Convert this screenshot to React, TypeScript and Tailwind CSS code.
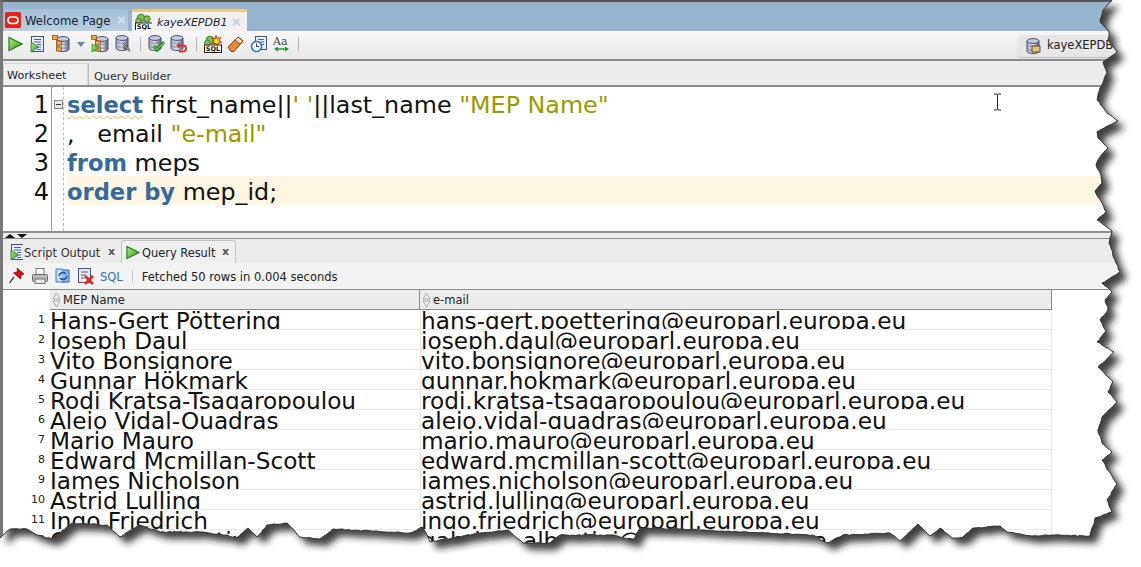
import React from "react";

const TOOL_FONT = "font-['DejaVu_Sans',sans-serif]";

const RIGHT_AND_BOTTOM: number[][] = [
  [1112, 0], [1103, 10], [1100, 22], [1109, 32], [1108, 40], [1117, 52], [1103, 62], [1107, 73], [1100, 88], [1097, 100],
  [1107, 113], [1118, 121], [1097, 132], [1098, 138], [1108, 148], [1100, 157], [1096, 165], [1101, 175], [1102, 183],
  [1095, 191], [1102, 203], [1106, 212], [1097, 220], [1112, 231], [1109, 243], [1115, 260], [1120, 272], [1102, 283],
  [1112, 292], [1105, 300], [1108, 310], [1100, 320], [1106, 331], [1097, 342], [1114, 352], [1098, 367], [1108, 377],
  [1113, 382], [1108, 392], [1117, 402], [1102, 417], [1098, 430], [1102, 443], [1112, 452], [1102, 460], [1113, 478],
  [1117, 484], [1107, 500], [1112, 512], [1095, 518], [1090, 536], [1055, 535], [1032, 536], [1007, 532], [1000, 526],
  [973, 528], [963, 537], [952, 538], [940, 528], [930, 536], [918, 524], [900, 541], [890, 533], [843, 535], [827, 543],
  [813, 535], [747, 532], [680, 529], [640, 528], [633, 540], [613, 535], [560, 535], [550, 543], [523, 543], [508, 530],
  [480, 533], [430, 542], [423, 527], [410, 533], [333, 529], [320, 539], [300, 537], [287, 523], [267, 525], [257, 537],
  [248, 528], [237, 538], [227, 535], [200, 532], [160, 532], [140, 525], [120, 537], [107, 525], [72, 523], [52, 539],
  [37, 535], [27, 529], [10, 529], [0, 538],
];

// roughen the edge a bit between the hand picked points
const tornLine = () => {
  let d = "";
  let seed = 0;
  RIGHT_AND_BOTTOM.forEach(([x, y], i) => {
    if (i === 0) {
      d += x + " " + y;
      return;
    }
    const [px, py] = RIGHT_AND_BOTTOM[i - 1];
    const steps = Math.max(1, Math.floor(Math.hypot(x - px, y - py) / 3));
    for (let s = 1; s <= steps; s++) {
      seed += 1;
      const j = Math.sin(seed * 12.9898) * 43758.5453;
      const off = s === steps ? 0 : (j - Math.floor(j) - 0.5) * 1.2;
      const horiz = Math.abs(x - px) > Math.abs(y - py);
      const nx = px + ((x - px) * s) / steps + (horiz ? 0 : off);
      const ny = py + ((y - py) * s) / steps + (horiz ? off : 0);
      d += " L" + nx.toFixed(1) + " " + ny.toFixed(1);
    }
  });
  return d;
};

const TornEdge = () => {
  const line = "M" + tornLine();
  const shape = line + " L0 0 Z";
  return (
    <svg className="absolute inset-0 pointer-events-none" width={1141} height={567}>
      <defs>
        <linearGradient id="green" x1="0" y1="0" x2="1" y2="1">
          <stop offset="0" stopColor="#b5ee7a" />
          <stop offset="1" stopColor="#2e9c1e" />
        </linearGradient>
        <linearGradient id="dbBody" x1="0" y1="0" x2="1" y2="0">
          <stop offset="0" stopColor="#a9acc6" />
          <stop offset="0.5" stopColor="#dcdde9" />
          <stop offset="1" stopColor="#5d6084" />
        </linearGradient>
        <filter id="blurShadow" x="-5%" y="-5%" width="110%" height="110%">
          <feGaussianBlur stdDeviation="3.5" />
        </filter>
        <clipPath id="outside">
          <path clipRule="evenodd" d={"M0 0H1141V567H0Z " + shape} />
        </clipPath>
      </defs>
      <g clipPath="url(#outside)">
        <rect width={1141} height={567} fill="#fff" />
        <path d={shape} transform="translate(7 7)" fill="#1c1c1c" fillOpacity={0.85} filter="url(#blurShadow)" />
      </g>
      <path d={line} fill="none" stroke="#333" strokeWidth={1} />
    </svg>
  );
};

const Play = ({ size = 16 }: { size?: number }) => (
  <svg width={size} height={size} viewBox="0 0 16 16" className="shrink-0">
    <path d="M2 1.5 15 8 2 14.5Z" fill="url(#green)" stroke="#2a7a22" strokeWidth={1.2} />
  </svg>
);

const Cyl = ({ x = 0, y = 0 }: { x?: number; y?: number }) => (
  <g transform={"translate(" + x + " " + y + ")"}>
    <path d="M1 3v10c0 1.6 2.7 2.6 6 2.6s6-1 6-2.6V3Z" fill="url(#dbBody)" stroke="#4c4f70" />
    <ellipse cx="7" cy="3" rx="6" ry="2.4" fill="#c9cbdc" stroke="#4c4f70" />
    <path d="M1.5 7c1 1.6 10 1.6 11 0M1.5 11c1 1.6 10 1.6 11 0" fill="none" stroke="#6e7193" strokeWidth={0.7} />
  </g>
);

const Ico = ({ children }: { children: React.ReactNode }) => (
  <svg width={18} height={18} viewBox="0 0 18 18" className="shrink-0">
    {children}
  </svg>
);

const Boxes = () => (
  <g fill="#f0a83c" stroke="#8a5a14" strokeWidth={0.8}>
    <rect x="0.5" y="0.5" width="5" height="4" />
    <rect x="4.5" y="6" width="5" height="4" />
    <rect x="4.5" y="12" width="5" height="4" />
  </g>
);

const DocPlay = () => (
  <Ico>
    <rect x="3.5" y="1.5" width="12" height="15" fill="#e9edf7" stroke="#40508c" />
    <path d="M6 4.5h7M6 7h7M9 9.5h4M9 12h4M9 14.5h4" stroke="#4a5fa8" />
    <path d="M3 7 10.5 12 3 17Z" fill="url(#green)" stroke="#2a7a22" strokeWidth={0.8} />
  </Ico>
);

const SqlBadge = ({ star = false }: { star?: boolean }) => (
  <Ico>
    <circle cx="6" cy="5" r="3.8" fill="#7fc254" stroke="#3f7d2a" />
    <circle cx="3.5" cy="8" r="2.8" fill="#7fc254" stroke="#3f7d2a" />
    <circle cx="12" cy="6" r="3.2" fill="#7fc254" stroke="#3f7d2a" />
    {star && <path d="M12 0.5 13.3 3.5 16.5 2.5 15 5.5 17.5 7.5 14.5 8 13.5 11 11.5 8.5 8.5 9 10 6 8 3.5 11 3.8Z" fill="#f7d226" stroke="#d8231a" strokeWidth={1} />}
    <rect x="0.5" y="10" width="17" height="7.5" fill="#fff" stroke="#222" />
    <text x="9" y="16.3" textAnchor="middle" fontSize="6.5" fontWeight="700" fontFamily="DejaVu Sans, sans-serif" fill="#111">SQL</text>
  </Ico>
);

const Sep = () => <div className="w-px h-[14px] bg-[#b5b5b5] shrink-0" />;

const TopToolbar = () => (
  <div className="h-[30px] flex items-center bg-gradient-to-b from-[#f7f7f7] to-[#e9e9e9] border-b-2 border-[#8c8c8c] pl-[4px] pb-[2px] shrink-0">
    <div className="w-[15px] flex justify-center"><Play /></div>
    <div className="ml-[6px]"><DocPlay /></div>
    <div className="ml-[6px]">
      <Ico><Cyl x={4} y={1} /><Boxes /></Ico>
    </div>
    <svg width="8" height="5" className="ml-[7px]"><path d="M0 0h8L4 5Z" fill="#5f86b4" /></svg>
    <div className="ml-[6px]">
      <Ico>
        <Cyl x={4} y={1} /><Boxes />
        <path d="M1 9 8 13 1 17Z" fill="url(#green)" stroke="#2a7a22" strokeWidth={0.7} />
      </Ico>
    </div>
    <div className="ml-[6px]">
      <Ico>
        <Cyl x={0} y={0} />
        <path d="M8 9 15 16M9 14l3-3" stroke="#555" strokeWidth={2} fill="none" />
        <path d="M8 9l7 7" stroke="#cfd2da" strokeWidth={0.8} />
      </Ico>
    </div>
    <div className="ml-[7px]"><Sep /></div>
    <div className="ml-[7px]">
      <Ico>
        <Cyl x={0} y={0} />
        <path d="M6 11l3 4 7-8" fill="none" stroke="#0f7a1e" strokeWidth={3} />
        <path d="M6 11l3 4 7-8" fill="none" stroke="#5fd03c" strokeWidth={1.3} />
      </Ico>
    </div>
    <div className="ml-[4px]">
      <Ico>
        <Cyl x={0} y={0} />
        <path d="M8 10.5h5a3 3 0 0 1 0 6H9" fill="none" stroke="#d8362a" strokeWidth={2} />
        <path d="M6 10.5 10 7.5V13.5Z" fill="#d8362a" />
      </Ico>
    </div>
    <div className="ml-[8px]"><Sep /></div>
    <div className="ml-[7px]"><SqlBadge star /></div>
    <div className="ml-[5px]">
      <Ico>
        <path d="M1 12 11 2l5 4L7 16.5H4Z" fill="#e8892e" stroke="#7a4212" />
        <path d="M8 5l5 4 3-3-5-4Z" fill="#f4e2c4" stroke="#7a4212" />
      </Ico>
    </div>
    <div className="ml-[5px]">
      <Ico>
        <rect x="5.5" y="1.5" width="11" height="13" fill="#e9edf7" stroke="#40508c" />
        <path d="M8 4.5h6M10 7h4M12 9.5h2" stroke="#4a5fa8" />
        <circle cx="6.5" cy="11.5" r="5" fill="#fff" stroke="#2a72c0" strokeWidth={1.6} />
        <path d="M6.5 8.5v3h2.5" fill="none" stroke="#333" />
      </Ico>
    </div>
    <div className="ml-[5px]">
      <Ico>
        <text x="0" y="10" fontSize="11" fontFamily="DejaVu Serif, serif" fill="#444">Aa</text>
        <path d="M3 14h11" stroke="#1f9a2e" strokeWidth={1.5} />
        <path d="M1 14 5 11.5V16.5ZM16 14 12 11.5V16.5Z" fill="#1f9a2e" />
      </Ico>
    </div>
    <div className="ml-[7px]"><Sep /></div>
    <div className="ml-auto mr-[21px] mt-[4px] h-[22px] w-[102px] flex items-center rounded-[3px] bg-[#e6e6e6] shadow-[0_1px_1px_#bdbdbd] pl-[8px] overflow-hidden">
      <Ico><Cyl x={0} y={1} /><rect x="6" y="9" width="8" height="6" fill="#e7c46a" stroke="#333" strokeWidth={0.8} /></Ico>
      <span className={"ml-[3px] text-[11.5px] text-[#222] whitespace-nowrap " + TOOL_FONT}>kayeXEPDB1</span>
    </div>
  </div>
);

const TabStrip = () => (
  <div className={"h-[29px] bg-[#97b4cf] flex items-end pl-px shrink-0 text-[11.7px] " + TOOL_FONT}>
    <div className="w-[124px] h-[22px] bg-gradient-to-b from-[#a6c0d8] to-[#b9cfe2] rounded-t-[3px] flex items-center pl-px text-[#1c2430]">
      <svg width="16" height="16" viewBox="0 0 16 16" className="shrink-0 mr-[4px]">
        <rect width="16" height="16" rx="1.5" fill="#e2231a" />
        <rect x="3" y="5" width="10" height="6.5" rx="3.2" fill="none" stroke="#fff" strokeWidth={1.7} />
      </svg>
      <span className="whitespace-nowrap pt-[3px]">Welcome Page</span>
      <span className="ml-auto mr-px text-[#dbe5ee] font-bold text-[13px]">×</span>
    </div>
    <div className="ml-[4px] w-[115px] h-[22px] flex flex-col rounded-t-[3px] overflow-hidden bg-[#f1f1f1]">
      <div className="h-[3px] bg-[#f4c77e] shrink-0" />
      <div className="flex-1 flex items-center pl-[3px] text-[#1c2430]">
        <div className="w-[17px] h-[17px] overflow-hidden shrink-0"><SqlBadge /></div>
        <span className="ml-[5px] italic whitespace-nowrap text-[11px] pt-[2px]">kayeXEPDB1</span>
        <span className="ml-auto mr-[5px] text-[#c9c9c9] font-bold text-[13px]">×</span>
      </div>
    </div>
  </div>
);

const WorksheetTabs = () => (
  <div className={"h-[26px] bg-[#ececec] border-b-2 border-[#8c8c8c] flex text-[11.2px] text-[#333] shrink-0 " + TOOL_FONT}>
    <div className="w-[85px] mt-[2px] h-[22px] border border-b-0 border-[#d4d4d4] bg-[#f0f0f0] shadow-[1px_0_0_#bbb] flex items-center pl-[3px] pt-[4px] text-[#1c2430]">Worksheet</div>
    <div className="ml-[6px] flex items-center pt-[8px] whitespace-nowrap">Query Builder</div>
  </div>
);

const KEYWORD = "font-bold text-[22.6px] text-[#366a9b]";

const CODE_LINES: React.ReactNode[] = [
  <>
    <span className={KEYWORD + " underline decoration-wavy decoration-[#e9bf4a] decoration-1 underline-offset-2"}>select</span>
    {" first_name||"}
    <span className="text-[#9a9a00]">' '</span>
    {"||last_name "}
    <span className="text-[#9a9a00]">"MEP Name"</span>
  </>,
  <>
    {",   email "}
    <span className="text-[#9a9a00]">"e-mail"</span>
  </>,
  <>
    <span className={KEYWORD}>from</span>
    {" meps"}
  </>,
  <>
    <span className={KEYWORD}>order by</span>
    {" mep_id;"}
  </>,
];

const Editor = () => (
  <div className={"relative h-[146px] flex bg-white border-b-2 border-[#8c8c8c] overflow-hidden shrink-0 text-[23.8px] text-[#111] " + TOOL_FONT}>
    <div className="w-[49px] border-r border-[#999] pt-[4px] shrink-0">
      {CODE_LINES.map((_, i) => (
        <div key={i} className="h-[29px] leading-[29px] text-right pr-[2px] text-[24px]">{i + 1}</div>
      ))}
    </div>
    <div className="w-[12px] shrink-0 border-r border-dashed border-[#bdbdbd] pt-[13px] pl-[2px]">
      <div className="w-[9px] h-[9px] border border-[#888] bg-[#e8e8e8] flex items-center justify-center">
        <div className="w-[5px] h-px bg-[#333]" />
      </div>
    </div>
    <div className="flex-1 pt-[2px] pl-[3px] whitespace-pre">
      {CODE_LINES.map((line, i) => (
        <div key={i} className={"h-[29px] leading-[33px] " + (i === 3 ? "bg-[#fdf6e3]" : "")}>{line}</div>
      ))}
    </div>
    <svg width="9" height="18" viewBox="0 0 9 18" className="absolute left-[990px] top-[6px]">
      <path d="M1 1h2.5l1 1 1-1H8M4.5 2v14M1 17h2.5l1-1 1 1H8" fill="none" stroke="#222" />
    </svg>
  </div>
);

const Splitter = () => (
  <div className="h-[6px] bg-[#ececec] border-b border-[#8c8c8c] flex items-center pl-[2px] gap-[2px] shrink-0">
    <div className="w-0 h-0 border-x-[5px] border-x-transparent border-b-[4px] border-b-[#111]" />
    <div className="w-0 h-0 border-x-[5px] border-x-transparent border-t-[4px] border-t-[#111]" />
  </div>
);

const ResultTabs = () => (
  <div className={"h-[24px] bg-[#ececec] flex items-end pl-px text-[11.4px] text-[#333] shrink-0 " + TOOL_FONT}>
    <div className="w-[117px] h-[22px] flex items-center pl-[4px] whitespace-nowrap">
      <div className="mr-[1px] w-[15px] overflow-hidden"><DocPlay /></div>
      <span className="pt-[3px]">Script Output</span>
      <span className="ml-auto mr-[6px] text-[#555] font-bold text-[11px]">x</span>
    </div>
    <div className="w-[115px] h-[23px] flex items-center pl-[3px] bg-[#f0f0f0] border border-b-0 border-[#c4c4c4] rounded-t-[3px] whitespace-nowrap text-[#1c2430]">
      <Play size={15} />
      <span className="ml-[2px] pt-[3px]">Query Result</span>
      <span className="ml-auto mr-[6px] text-[#555] font-bold text-[11px]">x</span>
    </div>
  </div>
);

const ResultToolbar = () => (
  <div className={"h-[27px] flex items-center bg-[#f3f3f3] border-b border-[#8c8c8c] pl-[5px] text-[11.5px] text-[#222] shrink-0 " + TOOL_FONT}>
    <Ico>
      <path d="M9 1l7 6-2.5 1-1 4-7-6 4-1.5Z" fill="#d5141a" stroke="#7a0c10" strokeWidth={0.7} />
      <path d="M6 10 1.5 16" stroke="#444" strokeWidth={1.3} />
    </Ico>
    <div className="ml-[5px]">
      <Ico>
        <rect x="5" y="1.5" width="8" height="6" fill="#fff" stroke="#777" />
        <rect x="1.5" y="7.5" width="15" height="7" rx="1" fill="#b9b9c0" stroke="#666" />
        <rect x="4" y="12" width="10" height="4.5" fill="#e9e9e9" stroke="#777" />
      </Ico>
    </div>
    <div className="ml-[5px]">
      <Ico>
        <path d="M2 2h6l3 4v9H2Z" fill="#c9dcf3" stroke="#3b78be" />
        <path d="M8 3h7v12H8" fill="#8bb8e8" stroke="#2a66ad" />
        <path d="M5 9a4 4 0 0 1 7-2M13 9a4 4 0 0 1-7 2" fill="none" stroke="#1a4f9a" strokeWidth={1.6} />
      </Ico>
    </div>
    <div className="ml-[5px]">
      <Ico>
        <rect x="1.5" y="1.5" width="12" height="14" fill="#e9e9f4" stroke="#4c4f70" />
        <path d="M4 5h7M4 8h5M4 11h3" stroke="#4a5fa8" />
        <path d="M8 9l8 8M16 9l-8 8" stroke="#dd2a1c" strokeWidth={2.6} />
      </Ico>
    </div>
    <span className="ml-[5px] pt-[3px] text-[#2f6fb5]">SQL</span>
    <div className="ml-[9px] w-px h-[12px] bg-[#c4c4c4]" />
    <span className="ml-[9px] pt-[3px] whitespace-nowrap">Fetched 50 rows in 0.004 seconds</span>
  </div>
);

const SortMark = () => (
  <svg width="9" height="16" viewBox="0 0 9 16" className="shrink-0 mr-[2px]">
    <path d="M4.5 1 8 7H1ZM4.5 15 1 9h7Z" fill="#eee" stroke="#999" strokeWidth={0.8} />
  </svg>
);

const RESULT_ROWS = [
  ["Hans-Gert Pöttering", "hans-gert.poettering@europarl.europa.eu"],
  ["Joseph Daul", "joseph.daul@europarl.europa.eu"],
  ["Vito Bonsignore", "vito.bonsignore@europarl.europa.eu"],
  ["Gunnar Hökmark", "gunnar.hokmark@europarl.europa.eu"],
  ["Rodi Kratsa-Tsagaropoulou", "rodi.kratsa-tsagaropoulou@europarl.europa.eu"],
  ["Alejo Vidal-Quadras", "alejo.vidal-quadras@europarl.europa.eu"],
  ["Mario Mauro", "mario.mauro@europarl.europa.eu"],
  ["Edward Mcmillan-Scott", "edward.mcmillan-scott@europarl.europa.eu"],
  ["James Nicholson", "james.nicholson@europarl.europa.eu"],
  ["Astrid Lulling", "astrid.lulling@europarl.europa.eu"],
  ["Ingo Friedrich", "ingo.friedrich@europarl.europa.eu"],
  ["Gabriele Albertini", "gabriele.albertini@europarl.europa.eu"],
];

const ResultGrid = () => (
  <div className={"flex-1 bg-white overflow-hidden " + TOOL_FONT}>
    <div className="h-[20px] flex text-[11.5px] text-[#222]">
      <div className="w-[47px] shrink-0" />
      <div className="w-[370px] flex items-center pl-[2px] bg-[#ececec] border-r border-b border-[#8c8c8c]"><SortMark /><span className="pt-[2px]">MEP Name</span></div>
      <div className="w-[632px] flex items-center pl-[2px] bg-[#ececec] border-r border-b border-[#8c8c8c]"><SortMark /><span className="pt-[2px]">e-mail</span></div>
    </div>
    {RESULT_ROWS.map((row, i) => (
      <div key={row[1]} className="h-[20px] flex items-stretch">
        <div className="w-[47px] shrink-0 text-right pr-[5px] pt-[2px] text-[11px] leading-[16px] text-[#222]">{i + 1}</div>
        <div className="w-[370px] border-b border-[#e8e8e8] overflow-hidden text-[23.2px] leading-[22px] text-[#111] whitespace-nowrap">{row[0]}</div>
        <div className="w-[632px] border-x border-b border-[#e8e8e8] overflow-hidden text-[23.2px] leading-[22px] text-[#111] whitespace-nowrap">{row[1]}</div>
      </div>
    ))}
  </div>
);

const App = () => {
  return (
    <div className="relative w-[1141px] h-[567px] overflow-hidden bg-white">
      <div className="h-full flex flex-col border-t-2 border-l-[3px] border-t-[#555] border-l-[#777]">
        <TabStrip />
        <TopToolbar />
        <WorksheetTabs />
        <Editor />
        <Splitter />
        <ResultTabs />
        <ResultToolbar />
        <ResultGrid />
      </div>
      <TornEdge />
    </div>
  );
};

export default App;
